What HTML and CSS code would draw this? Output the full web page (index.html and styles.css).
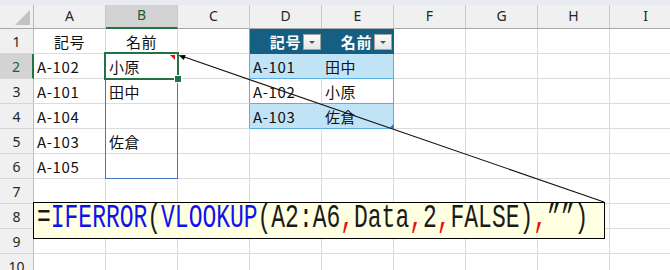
FILE: index.html
```html
<!DOCTYPE html>
<html lang="ja">
<head>
<meta charset="utf-8">
<title>VLOOKUP</title>
<link rel="stylesheet" href="styles.css">
</head>
<body>
<div class="sheet">
  <div class="band"></div>
  <div class="grid">
    <div class="corner"></div>
    <div class="ch">A</div><div class="ch sel">B</div><div class="ch">C</div><div class="ch">D</div><div class="ch">E</div><div class="ch">F</div><div class="ch">G</div><div class="ch">H</div><div class="ch">I</div>

    <div class="rh">1</div>
    <div class="c ctr">記号</div><div class="c ctr">名前</div><div class="c tl"></div>
    <div class="c th"><span>記号</span><span class="dd"></span></div>
    <div class="c th te"><span>名前</span><span class="dd"></span></div>
    <div class="c"></div><div class="c"></div><div class="c"></div><div class="c"></div>

    <div class="rh rsel">2</div>
    <div class="c">A-102</div>
    <div class="c b2">小原<span class="cmt"></span></div>
    <div class="c tl"></div>
    <div class="c tb td">A-101</div><div class="c tb te">田中</div>
    <div class="c"></div><div class="c"></div><div class="c"></div><div class="c"></div>

    <div class="rh">3</div>
    <div class="c">A-101</div><div class="c">田中</div><div class="c tl"></div>
    <div class="c tw">A-102</div><div class="c tw te">小原</div>
    <div class="c"></div><div class="c"></div><div class="c"></div><div class="c"></div>

    <div class="rh">4</div>
    <div class="c">A-104</div><div class="c"></div><div class="c tl"></div>
    <div class="c tb td">A-103</div><div class="c tb te">佐倉</div>
    <div class="c"></div><div class="c"></div><div class="c"></div><div class="c"></div>

    <div class="rh">5</div>
    <div class="c">A-103</div><div class="c">佐倉</div><div class="c"></div><div class="c"></div><div class="c"></div><div class="c"></div><div class="c"></div><div class="c"></div><div class="c"></div>

    <div class="rh">6</div>
    <div class="c">A-105</div><div class="c"></div><div class="c"></div><div class="c"></div><div class="c"></div><div class="c"></div><div class="c"></div><div class="c"></div><div class="c"></div>

    <div class="rh">7</div>
    <div class="c"></div><div class="c"></div><div class="c"></div><div class="c"></div><div class="c"></div><div class="c"></div><div class="c"></div><div class="c"></div><div class="c"></div>

    <div class="rh">8</div>
    <div class="c"></div><div class="c"></div><div class="c"></div><div class="c"></div><div class="c"></div><div class="c"></div><div class="c"></div><div class="c"></div><div class="c"></div>

    <div class="rh">9</div>
    <div class="c"></div><div class="c"></div><div class="c"></div><div class="c"></div><div class="c"></div><div class="c"></div><div class="c"></div><div class="c"></div><div class="c"></div>

    <div class="rh">10</div>
    <div class="c"></div><div class="c"></div><div class="c"></div><div class="c"></div><div class="c"></div><div class="c"></div><div class="c"></div><div class="c"></div><div class="c"></div>
  </div>

  <div class="range"></div>
  <div class="selbox"><span class="handle"></span></div>

  <svg class="arrow" width="670" height="270" viewBox="0 0 670 270">
    <line x1="604" y1="202" x2="183" y2="56.6" stroke="#111" stroke-width="1.1"/>
    <polygon points="178.5,55.3 183.9,59.9 185.6,55.0" fill="#000"/>
    <polygon points="389.5,128 393.5,124 393.5,128" fill="#3a6cc6"/>
  </svg>

  <div class="formula"><span class="ftext">=<span class="fn">IFERROR</span>(<span class="fn">VLOOKUP</span>(A2:A6<span class="sep">,</span>Data<span class="sep">,</span>2<span class="sep">,</span>FALSE)<span class="sep">,</span>””)</span></div>
</div>
</body>
</html>
```

FILE: styles.css
```css
html, body {
  margin: 0;
  padding: 0;
  background: #ffffff;
  overflow: hidden;
}

.sheet {
  position: relative;
  width: 670px;
  height: 270px;
  overflow: hidden;
  font-family: "Noto Sans CJK JP", "Noto Sans", sans-serif;
}

.band {
  height: 5px;
  background: #e8ebef;
}

.grid {
  display: grid;
  grid-template-columns: 34px repeat(9, 72px);
  grid-template-rows: 24px repeat(10, 25px);
}

.grid > div {
  box-sizing: border-box;
  border-right: 1px solid #dcdcdc;
  border-bottom: 1px solid #dcdcdc;
  display: flex;
  align-items: center;
  overflow: hidden;
  white-space: nowrap;
}

.grid > .corner {
  position: relative;
  background: #f0f0f0;
  border-right: 1px solid #b8b8b8;
  border-bottom: 1px solid #a8a8a8;
}

.corner::after {
  content: "";
  position: absolute;
  right: 3px;
  bottom: 3px;
  width: 0;
  height: 0;
  border-left: 15px solid transparent;
  border-bottom: 15px solid #c2c2c2;
}

.grid > .ch {
  background: #f0f0f0;
  border-right-color: #c8c8c8;
  border-bottom-color: #a8a8a8;
  justify-content: center;
  font-family: "Noto Sans", sans-serif;
  font-size: 14px;
  color: #262626;
  padding-bottom: 3px;
}

.grid > .ch.sel {
  background: #d3d3d3;
  border-bottom: 2px solid #217346;
  color: #1b5e3a;
}

.grid > .rh {
  background: #f0f0f0;
  border-right-color: #bdbdbd;
  border-bottom-color: #d6d6d6;
  justify-content: center;
  font-family: "Noto Sans", sans-serif;
  font-size: 14px;
  color: #262626;
}

.grid > .rh.rsel {
  background: #d3d3d3;
  border-right: 2px solid #217346;
  color: #1b5e3a;
}

.c {
  padding-left: 3px;
  font-size: 15px;
  letter-spacing: 0.6px;
  color: #111;
  padding-top: 1px;
}

.grid > .ctr {
  justify-content: center;
  padding-left: 0;
}

.grid > .tl {
  border-right-color: #5aaee0;
}

.grid > .th {
  background: #156082;
  border-right-color: #156082;
  border-bottom-color: #156082;
  color: #ffffff;
  font-weight: bold;
  justify-content: flex-end;
  padding-right: 0;
  gap: 2px;
}

.grid > .th.te {
  border-right-color: #156082;
  padding-right: 1px;
}

.dd {
  position: relative;
  box-sizing: border-box;
  width: 18px;
  height: 16px;
  background: linear-gradient(#fbfbfb, #e6e6e6);
  border: 1px solid #a2a2a2;
}

.dd::after {
  content: "";
  position: absolute;
  left: 5px;
  top: 6px;
  width: 0;
  height: 0;
  border-left: 3px solid transparent;
  border-right: 3px solid transparent;
  border-top: 3px solid #555555;
}

.grid > .tb {
  background: #c0e4f5;
  border-bottom-color: #5aaee0;
}

.grid > .tb.td {
  border-right-color: #c0e4f5;
}

.grid > .tw {
  border-bottom-color: #5aaee0;
}

.grid > .te {
  border-right-color: #5aaee0;
}

.grid > .b2 {
  position: relative;
  overflow: visible;
}

.cmt {
  position: absolute;
  right: 2px;
  top: 1px;
  width: 0;
  height: 0;
  border-left: 5px solid transparent;
  border-top: 5px solid #e01010;
}

.range {
  position: absolute;
  left: 105px;
  top: 53px;
  width: 73px;
  height: 126px;
  box-sizing: border-box;
  border: 1px solid #4472c4;
}

.selbox {
  position: absolute;
  left: 104px;
  top: 52px;
  width: 75px;
  height: 28px;
  box-sizing: border-box;
  border: 2px solid #217346;
}

.handle {
  position: absolute;
  right: -5px;
  bottom: -5px;
  width: 6px;
  height: 6px;
  background: #217346;
  border: 1px solid #ffffff;
}

.arrow {
  position: absolute;
  left: 0;
  top: 0;
  pointer-events: none;
}

.formula {
  position: absolute;
  left: 33px;
  top: 202px;
  width: 572px;
  height: 37px;
  box-sizing: border-box;
  border: 1px solid #000000;
  background: #ffffe1;
  padding-left: 3px;
  overflow: visible;
}

.ftext {
  display: inline-block;
  font-family: "Liberation Mono", monospace;
  font-size: 33px;
  line-height: 32px;
  color: #1a1a1a;
  white-space: nowrap;
  transform: scaleX(0.696);
  transform-origin: 0 0;
}

.fn {
  color: #1010f0;
}

.sep {
  color: #e81010;
}
```
